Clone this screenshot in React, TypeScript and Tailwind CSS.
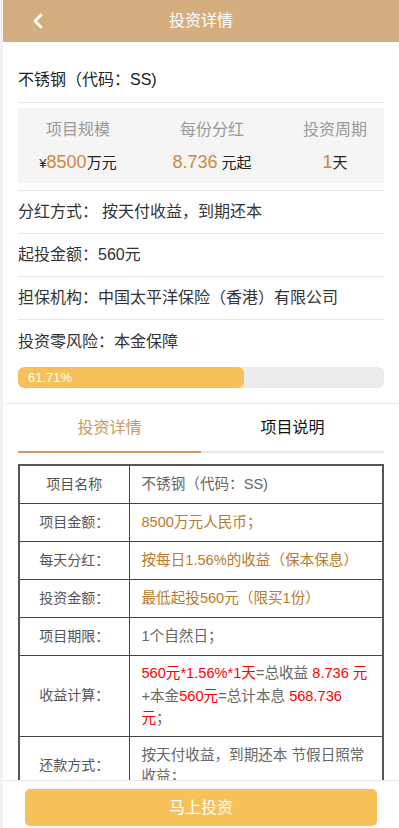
import React from "react";

const font = { fontFamily: '"Liberation Sans", "Noto Sans CJK SC", sans-serif' };

function Row({ label, value, gap }: { label: string; value: string; gap?: boolean }) {
  return (
    <div className="flex h-[43px] items-center border-b border-[#e6e6e6] text-[16px] text-[#333]">
      <span>{label}</span>
      <span className={gap ? "ml-[4px]" : ""}>{value}</span>
    </div>
  );
}

const cellL = "border border-[#444] w-[110px] text-center text-[14px] text-[#555] align-middle py-[8px] leading-[21px]";
const cellR = "border border-[#444] text-left text-[14.6px] align-middle py-[8px] pl-[12px] pr-[10px] leading-[21px]";
const cellR3 = "border border-[#444] text-left text-[14.6px] align-middle py-[6px] pl-[12px] pr-[10px] leading-[22.5px]";

export default function App() {
  return (
    <div className="min-h-screen bg-[#f2f2f2] pl-[3px]" style={font}>
      <div className="min-h-screen bg-white pb-[60px]">
        {/* Header */}
        <div className="relative flex h-[42px] items-center justify-center bg-[#d5ae80]">
          <svg className="absolute left-[28px] top-[13px]" width="14" height="16" viewBox="0 0 14 16">
            <polyline points="10,2 4,8 10,14" fill="none" stroke="#fff" strokeWidth="2.6" strokeLinecap="round" strokeLinejoin="round" />
          </svg>
          <span className="text-[16px] text-white">投资详情</span>
        </div>

        <div className="px-[15px]">
          <div className="border-b border-[#e6e6e6] pt-[28px] pb-[12px] text-[16px] leading-[20px] text-[#222]">
            不锈钢（代码：SS)
          </div>

          <div className="mt-[5px] grid grid-cols-[120px_148px_1fr] bg-[#f5f5f5] pt-[12px] pb-[7px]">
            <div className="flex flex-col items-center">
              <span className="text-[16px] leading-[20px] text-[#999]">项目规模</span>
              <span className="mt-[10px] leading-[24px] text-[#222]">
                <span className="text-[13px]">¥</span>
                <span className="text-[18px] text-[#c98b3c]">8500</span>
                <span className="text-[15px]">万元</span>
              </span>
            </div>
            <div className="flex flex-col items-center">
              <span className="text-[16px] leading-[20px] text-[#999]">每份分红</span>
              <span className="mt-[10px] leading-[24px] text-[#222]">
                <span className="text-[18px] text-[#c98b3c]">8.736</span>
                <span className="text-[15px]"> 元起</span>
              </span>
            </div>
            <div className="flex flex-col items-center">
              <span className="text-[16px] leading-[20px] text-[#999]">投资周期</span>
              <span className="mt-[10px] leading-[24px] text-[#222]">
                <span className="text-[18px] text-[#c98b3c]">1</span>
                <span className="text-[15px]">天</span>
              </span>
            </div>
          </div>

          <div className="mt-[7px] border-t border-[#e6e6e6]">
            <Row label="分红方式：" value="按天付收益，到期还本" gap />
            <Row label="起投金额：" value="560元" />
            <Row label="担保机构：" value="中国太平洋保险（香港）有限公司" />
            <div className="flex h-[43px] items-center text-[16px] text-[#333]">投资零风险：本金保障</div>
          </div>

          <div className="mt-[4px] h-[21px] overflow-hidden rounded-[6px] bg-[#ececec]">
            <div className="flex h-full items-center rounded-[6px] bg-[#f6c15b] pl-[10px] text-[13px] text-white" style={{ width: "61.71%" }}>
              61.71%
            </div>
          </div>
        </div>

        <div className="ml-[3px] mt-[15px] border-t border-[#e6e6e6]" />

        <div className="px-[15px]">
          <div className="grid h-[49px] grid-cols-2 border-b-2 border-[#e8e8e8]">
            <div className="-mb-[2px] flex items-center justify-center border-b-2 border-[#cf9a5a] text-[16px] text-[#c9995a]">投资详情</div>
            <div className="flex items-center justify-center text-[16px] text-[#111]">项目说明</div>
          </div>

          <table className="mt-[11px] w-full border-collapse border-2 border-[#555]">
            <tbody>
              <tr>
                <td className={cellL + " text-[#111]"}>项目名称</td>
                <td className={cellR + " text-[#666]"}>不锈钢（代码：SS)</td>
              </tr>
              <tr>
                <td className={cellL}>项目金额：</td>
                <td className={cellR + " text-[#b97a2e]"}>8500万元人民币；</td>
              </tr>
              <tr>
                <td className={cellL}>每天分红：</td>
                <td className={cellR + " text-[#b97a2e]"}>按每日1.56%的收益（保本保息）</td>
              </tr>
              <tr>
                <td className={cellL}>投资金额：</td>
                <td className={cellR + " text-[#b97a2e]"}>最低起投560元（限买1份）</td>
              </tr>
              <tr>
                <td className={cellL}>项目期限：</td>
                <td className={cellR + " text-[#666]"}>1个自然日；</td>
              </tr>
              <tr>
                <td className={cellL}>收益计算：</td>
                <td className={cellR3 + " text-[#666]"}>
                  <span className="text-[#ff0000]">560元*1.56%*1天</span>=总收益 <span className="text-[#ff0000]">8.736 元</span>+本金<span className="text-[#ff0000]">560元</span>=总计本息 <span className="text-[#ff0000]">568.736 元</span>；
                </td>
              </tr>
              <tr>
                <td className={cellL}>还款方式：</td>
                <td className={cellR + " text-[#666]"}>按天付收益，到期还本 节假日照常收益；</td>
              </tr>
            </tbody>
          </table>
        </div>
      </div>

      {/* Bottom bar */}
      <div className="fixed bottom-0 left-[3px] right-0 h-[48px] border-t border-[#e6e6e6] bg-white px-[22px] pt-[8px]">
        <button className="flex h-[37px] w-full items-center justify-center rounded-[5px] bg-[#f6c15b] text-[16px] text-white">
          马上投资
        </button>
      </div>
    </div>
  );
}
